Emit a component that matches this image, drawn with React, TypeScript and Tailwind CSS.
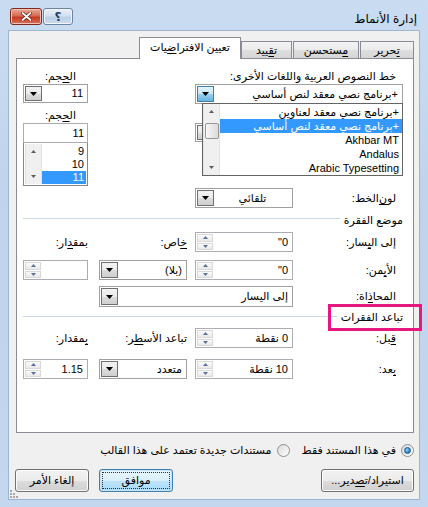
import React from "react";

type Kids = { children?: React.ReactNode; className?: string };

const Z = "\u200D";

const Arrow = ({ up = false, fill = "#000", w = 7, h = 4 }: { up?: boolean; fill?: string; w?: number; h?: number }) => (
  <svg width={w} height={h} viewBox={`0 0 ${w} ${h}`}>
    <path d={up ? `M${w / 2} 0L${w} ${h}H0z` : `M0 0H${w}L${w / 2} ${h}z`} fill={fill} />
  </svg>
);

// underlined access-key letter; zero-width joiners (here and in the neighbouring text) keep the Arabic joined
const U = ({ children, b = false, a = false }: { children: string; b?: boolean; a?: boolean }) => (
  <span className="underline underline-offset-[2px]">{(b ? Z : "") + children + (a ? Z : "")}</span>
);

const DropBtn = ({ hot = false }: { hot?: boolean }) => (
  <div
    className={
      hot
        ? "flex w-[17px] items-center justify-center border border-[#3c7fb1] bg-[linear-gradient(#e5f4fc,#c4e5f6_50%,#98d1ef_51%,#68b3db)]"
        : "flex w-[17px] items-center justify-center border border-[#707070] bg-[linear-gradient(#f2f2f2,#ebebeb_50%,#dddddd_51%,#cfcfcf)]"
    }
  >
    <Arrow />
  </div>
);

const Combo = ({ value, className = "", hot = false, center = false }: { value?: string; className?: string; hot?: boolean; center?: boolean }) => (
  <div className={`flex border border-[#a0a0a0] bg-white p-px ${className}`}>
    <div className={center ? "flex flex-1 items-center justify-center" : "flex flex-1 items-center pr-[3px]"}>{value}</div>
    <DropBtn hot={hot} />
  </div>
);

const SpinBtns = () => (
  <div className="flex w-[16px] flex-col gap-px">
    <div className="flex flex-1 items-center justify-center border border-[#d9d9d9] bg-[linear-gradient(#fbfbfb,#e9e9e9)]">
      <Arrow up fill="#5a6f9c" w={5} h={3} />
    </div>
    <div className="flex flex-1 items-center justify-center border border-[#d9d9d9] bg-[linear-gradient(#fbfbfb,#e9e9e9)]">
      <Arrow fill="#5a6f9c" w={5} h={3} />
    </div>
  </div>
);

const Spin = ({ value, className = "" }: { value?: string; className?: string }) => (
  <div className={`flex border border-[#abadb3] bg-white p-px ${className}`}>
    <div className="flex flex-1 items-center pr-[3px]">{value}</div>
    <SpinBtns />
  </div>
);

const ScrollBar = ({ thumb = false }: { thumb?: boolean }) => (
  <div className="flex w-[17px] flex-col items-center border-x border-[#e3e3e3] bg-[#f0f0f0]">
    <div className="flex h-[15px] items-center justify-center">
      <Arrow up fill="#5c5c5c" w={5} h={3} />
    </div>
    {thumb && <div className="mt-[4px] h-[16px] w-[14px] rounded-[2px] border border-[#979797] bg-[linear-gradient(90deg,#f6f6f6,#dcdcdc)]" />}
    <div className="flex-1" />
    <div className="flex h-[15px] items-center justify-center">
      <Arrow fill="#5c5c5c" w={5} h={3} />
    </div>
  </div>
);

const Lbl = ({ children }: Kids) => <div className="flex w-[110px] items-center pr-[7px]">{children}</div>;

const Tab = ({ children, className = "" }: Kids) => (
  <div className={`flex h-[17px] items-center justify-center border border-b-0 border-[#898c95] bg-[linear-gradient(#f3f3f3,#ebebeb_50%,#dedede_51%,#d6d6d6)] ${className}`}>
    {children}
  </div>
);

const Radio = ({ checked = false }: { checked?: boolean }) => (
  <div className="flex h-[13px] w-[13px] shrink-0 items-center justify-center rounded-full border border-[#8e8f8f] bg-[linear-gradient(135deg,#d9d9d9,#ffffff)]">
    {checked && <div className="h-[7px] w-[7px] rounded-full border border-[#1b5b93] bg-[radial-gradient(circle_at_40%_35%,#9bd6fa,#2b86cc_60%,#14599b)]" />}
  </div>
);

const Btn = ({ children, className = "", focus = false }: Kids & { focus?: boolean }) =>
  focus ? (
    <div className={`flex rounded-[3px] border border-[#3c7fb1] bg-[linear-gradient(#eaf6fd,#d9f0fc_50%,#bee6fd_51%,#a7d9f5)] p-[2px] shadow-[inset_0_0_0_1px_#c7e5f7] ${className}`}>
      <div className="flex flex-1 items-center justify-center border border-dotted border-[#333]">{children}</div>
    </div>
  ) : (
    <div className={`flex items-center justify-center rounded-[3px] border border-[#707070] bg-[linear-gradient(#f2f2f2,#ebebeb_50%,#dddddd_51%,#cfcfcf)] shadow-[inset_0_0_0_1px_#fbfbfb] ${className}`}>
      {children}
    </div>
  );

const Separator = ({ text, className = "", lineGap = "mb-[4px]" }: { text: string; className?: string; lineGap?: string }) => (
  <div className={`flex h-[20px] items-center ${className}`}>
    <span className="-ml-px">{text}</span>
    <div className={`mr-[5px] h-px flex-1 bg-[#cbd8e6] ${lineGap}`} />
  </div>
);

const fonts = ["+برنامج نصي معقد لعناوين", "+برنامج نصي معقد لنص أساسي", "Akhbar MT", "Andalus", "Arabic Typesetting"];

export default function App() {
  return (
    <div
      dir="rtl"
      className="relative flex h-[507px] w-[428px] flex-col overflow-hidden bg-[linear-gradient(#c9dcf1,#bfd4ec_40%,#c3d7ee)] font-['Liberation_Sans','DejaVu_Sans',sans-serif] text-[11px] leading-none text-black"
    >
      {/* title bar */}
      <div className="flex h-[30px] items-start justify-between pl-[10px] pr-[11px]">
        <span className="pt-[13px] text-[12px]">إدارة الأنماط</span>
        <div dir="ltr" className="flex gap-px pt-[8px]">
          <div className="flex h-[17px] w-[32px] items-center justify-center rounded-[3px] border border-[#7b2a1b] bg-[linear-gradient(#e9a99a,#d86a52_45%,#c43b20_55%,#d7735a)] shadow-[inset_0_0_0_1px_#f3c2b6]">
            <svg width="11" height="9" viewBox="0 0 11 9">
              <path d="M1.5 1L9.5 8M9.5 1L1.5 8" stroke="#5a1a10" strokeWidth="3.2" strokeLinecap="round" />
              <path d="M1.5 1L9.5 8M9.5 1L1.5 8" stroke="#fff" strokeWidth="1.8" strokeLinecap="round" />
            </svg>
          </div>
          <div className="flex h-[17px] w-[30px] items-center justify-center rounded-[3px] border border-[#6b84a6] bg-[linear-gradient(#e8f0f9,#d3e1f0_45%,#bcd0e7_55%,#c9dbee)] text-[12px] font-bold text-[#233a5c] shadow-[inset_0_0_0_1px_#f2f6fb]">
            ؟
          </div>
        </div>
      </div>

      {/* dialog body */}
      <div className="relative mx-[8px] flex h-[470px] flex-col border border-[#9fb4cd] bg-[#f0f0f0]">
        {/* tabs */}
        <div className="mt-[6px] flex h-[21px] items-end pr-[5px]">
          <Tab className="w-[54px]">
            <U a>ت</U>
            {`${Z}حرير`}
          </Tab>
          <Tab className="mr-px w-[66px]">
            <U a>م</U>
            {`${Z}ستحسن`}
          </Tab>
          <Tab className="mr-px w-[51px]">
            {`ت${Z}`}
            <U b a>ق</U>
            {`${Z}ييد`}
          </Tab>
          <div className="relative z-10 -mb-px flex h-[22px] w-[102px] items-center justify-center border border-b-0 border-[#898c95] bg-white pb-[3px]">
            تعيين الافترا<U a>ض</U>
            {`${Z}يات`}
          </div>
        </div>

        {/* tab panel */}
        <div className="ml-[7px] mr-[5px] flex h-[375px] flex-col border border-[#898c95] bg-white pl-[6px] pr-[10px] pt-[11px]">
          {/* fonts & sizes */}
          <div className="flex">
            <div className="relative flex w-[208px] flex-col">
              <div className="h-[13px] pr-[7px] leading-[13px]">خط النصوص العربية واللغات الأخرى:</div>
              <Combo hot value="+برنامج نصي معقد لنص أساسي" className="mt-px h-[20px]" />
              <Combo className="mt-[19px] h-[19px]" />
              {/* open dropdown list */}
              <div className="absolute left-[7px] top-[33px] z-10 flex h-[73px] w-[201px] border border-[#646464] bg-white">
                <div className="flex flex-1 flex-col pt-px">
                  {fonts.map((f, i) => (
                    <div
                      key={f}
                      className={i === 1 ? "h-[14px] bg-[#3399ff] pr-[3px] leading-[14px] text-white" : "h-[14px] pr-[3px] leading-[14px]"}
                    >
                      {f}
                    </div>
                  ))}
                </div>
                <ScrollBar thumb />
              </div>
            </div>
            <div className="flex-1" />
            <div className="flex w-[65px] flex-col">
              <div className="h-[13px] pr-[12px] leading-[13px]">
                {`ال${Z}`}
                <U b a>ح</U>
                {`${Z}جم:`}
              </div>
              <Combo value="11" className="mt-px h-[19px]" />
              <div className="mt-[6px] h-[13px] pr-[12px] leading-[13px]">
                {`ال${Z}`}
                <U b a>ح</U>
                {`${Z}جم:`}
              </div>
              <div className="mt-px flex h-[20px] items-center border border-[#abadb3] bg-white pr-[3px]">11</div>
              <div className="flex h-[43px] border border-t-0 border-[#828790] bg-white p-px">
                <div className="flex flex-1 flex-col pt-px">
                  <div className="h-[13px] pr-[2px] leading-[13px]">9</div>
                  <div className="h-[13px] pr-[2px] leading-[13px]">10</div>
                  <div className="h-[13px] bg-[#3399ff] pr-[2px] leading-[13px] text-white">11</div>
                </div>
                <ScrollBar />
              </div>
            </div>
          </div>

          {/* font colour */}
          <div className="mt-[2px] flex h-[20px]">
            <Lbl>
              لو<U>ن</U> الخط:
            </Lbl>
            <Combo value="تلقائي" center className="w-[98px]" />
          </div>

          <Separator text="موضع الفقرة" className="mt-[2px]" />

          <div className="mt-[2px] flex h-[20px]">
            <Lbl>
              {`إلى ال${Z}`}
              <U b a>ي</U>
              {`${Z}سار:`}
            </Lbl>
            <Spin value={'0"'} className="w-[98px]" />
            <div className="w-[8px]" />
            <div className="flex w-[88px] items-center">
              <U a>خ</U>
              {`${Z}اص:`}
            </div>
            <div className="w-[11px]" />
            <div className="flex w-[65px] items-center">
              {`بمق${Z}`}
              <U b>د</U>ار:
            </div>
          </div>

          <div className="mt-[8px] flex h-[20px]">
            <Lbl>
              الأ<U a>ي</U>
              {`${Z}من:`}
            </Lbl>
            <Spin value={'0"'} className="w-[98px]" />
            <div className="w-[8px]" />
            <Combo value="(بلا)" className="w-[88px]" />
            <div className="w-[11px]" />
            <Spin className="w-[65px]" />
          </div>

          <div className="mt-[6px] flex h-[21px]">
            <Lbl>
              المحا<U>ذ</U>اة:
            </Lbl>
            <Combo value="إلى اليسار" className="w-[194px]" />
          </div>

          <Separator text="تباعد الفقرات" lineGap="mb-[2px]" />

          <div className="mt-px flex h-[20px]">
            <Lbl>
              <U a>ق</U>
              {`${Z}بل:`}
            </Lbl>
            <Spin value="0 نقطة" className="w-[98px]" />
            <div className="w-[8px]" />
            <div className="flex w-[88px] items-center">
              {`تباعد الأس${Z}`}
              <U b a>ط</U>
              {`${Z}ر:`}
            </div>
            <div className="w-[11px]" />
            <div className="flex w-[65px] items-center">
              <U a>ب</U>
              {`${Z}مقدار:`}
            </div>
          </div>

          <div className="mt-[11px] flex h-[20px]">
            <Lbl>
              <U a>ب</U>
              {`${Z}عد:`}
            </Lbl>
            <Spin value="10 نقطة" className="w-[98px]" />
            <div className="w-[8px]" />
            <Combo value="متعدد" className="w-[88px]" />
            <div className="w-[11px]" />
            <Spin value="1.15" className="w-[65px]" />
          </div>
        </div>

        {/* scope radios */}
        <div className="mt-[10px] flex h-[14px] items-center pr-[5px]">
          <Radio checked />
          <span className="mr-[5px]">في هذا المستند فقط</span>
          <div className="mr-[12px]">
            <Radio />
          </div>
          <span className="mr-[5px]">مستندات جديدة تعتمد على هذا القالب</span>
        </div>

        {/* buttons */}
        <div className="mt-[12px] flex h-[23px] pl-[6px] pr-[5px]">
          <Btn className="w-[93px]">
            {`استيراد/ت${Z}`}
            <U b a>ص</U>
            {`${Z}دير...`}
          </Btn>
          <div className="flex-1" />
          <Btn focus className="w-[74px]">
            موافق
          </Btn>
          <Btn className="mr-[10px] w-[74px]">إلغاء الأمر</Btn>
        </div>

        {/* size grip */}
        <svg className="absolute bottom-0 left-0" width="10" height="10" viewBox="0 0 10 10">
          {[
            [1, 1], [1, 4], [4, 4], [1, 7], [4, 7], [7, 7],
          ].map(([x, y]) => (
            <rect key={`${x}-${y}`} x={x} y={y} width="2" height="2" fill="#a8a8a8" />
          ))}
        </svg>
      </div>

      {/* highlight box */}
      <div className="absolute left-[328px] top-[304px] h-[27px] w-[94px] border-[3px] border-[#e8177f]" />
    </div>
  );
}
